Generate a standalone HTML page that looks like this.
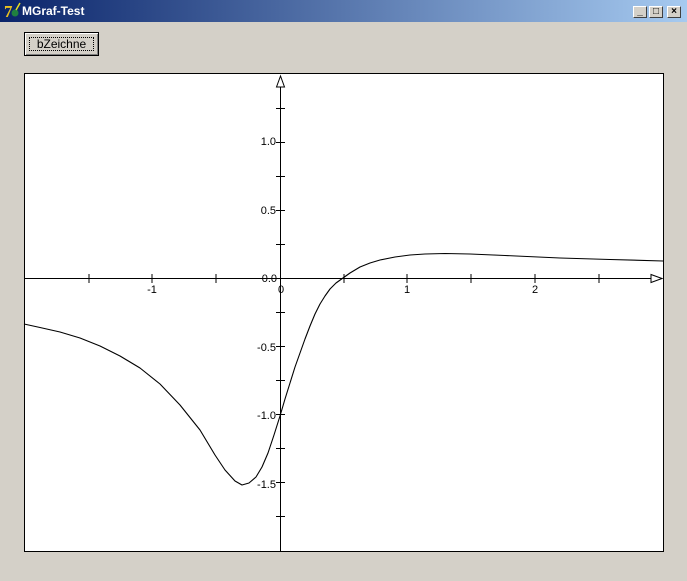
<!DOCTYPE html>
<html><head><style>
body{margin:0;width:687px;height:581px;overflow:hidden;background:#d4d0c8;font-family:"Liberation Sans",sans-serif;position:relative}
.tb{position:absolute;left:0;top:0;width:687px;height:22px;background:linear-gradient(to right,#0a246a,#a6caf0);}
.tt{position:absolute;left:22px;top:4px;color:#fff;font-weight:bold;font-size:12px}
.cb{position:absolute;top:6px;width:14px;height:12px;background:#d4d0c8;border:1px solid;border-color:#fff #404040 #404040 #fff;box-sizing:border-box;font-size:10px;line-height:10px;text-align:center;color:#000;font-weight:bold}
.btn{position:absolute;left:24px;top:32px;width:75px;height:24px;box-sizing:border-box;border:1px solid #000;background:#d4d0c8;box-shadow:inset 1px 1px #fff,inset -1px -1px #808080}
.btn span{position:absolute;left:4px;top:4px;right:4px;bottom:4px;border:1px dotted #000;font-size:12px;text-align:center;line-height:13px}
</style></head><body>
<div class="tb"><svg width="18" height="18" style="position:absolute;left:3px;top:2px"><text x="1" y="15" font-size="17" font-weight="bold" fill="#e8c020" font-family="Liberation Serif">7</text><circle cx="12" cy="11" r="3.5" fill="#208040"/><line x1="13" y1="8" x2="17" y2="1" stroke="#e8e020" stroke-width="1.5"/></svg><div class="tt">MGraf-Test</div>
<div class="cb" style="left:633px">_</div><div class="cb" style="left:649px">□</div><div class="cb" style="left:667px">×</div></div>
<div class="btn"><span>bZeichne</span></div>
<svg width="687" height="581" style="position:absolute;left:0;top:0" font-family="Liberation Sans" font-size="11">
<rect x="24.5" y="73.5" width="639" height="478" fill="#fff" stroke="#000"/>
<g stroke="#000" stroke-width="1" fill="none" shape-rendering="crispEdges">
<line x1="280.5" y1="76" x2="280.5" y2="551"/>
<line x1="25" y1="278.5" x2="660" y2="278.5"/>
<path d="M89 274v9M152 274v9M216 274v9M344 274v9M407 274v9M471 274v9M535 274v9M599 274v9"/>
<path d="M276 108.5h9M276 142.5h9M276 176.5h9M276 210.5h9M276 244.5h9M276 312.5h9M276 346.5h9M276 380.5h9M276 414.5h9M276 448.5h9M276 482.5h9M276 516.5h9"/>
</g>
<path d="M280.5 76 L276.5 87 L284.5 87 Z" fill="#fff" stroke="#000"/>
<path d="M662 278.5 L651 274.5 L651 282.5 Z" fill="#fff" stroke="#000"/>
<g fill="#000" text-anchor="end">
<text x="276" y="145">1.0</text><text x="276" y="214">0.5</text><text x="277" y="282">0.0</text>
<text x="276" y="351">-0.5</text><text x="276" y="419">-1.0</text><text x="276" y="488">-1.5</text>
</g>
<g fill="#000" text-anchor="middle">
<text x="152" y="293">-1</text><text x="281" y="293">0</text><text x="407" y="293">1</text><text x="535" y="293">2</text>
</g>
<polyline fill="none" stroke="#000" stroke-width="1.1" stroke-linejoin="round" points="24,324 40,327.5 60,332 80,338 100,346 120,356 140,368 160,384 180,405 200,430 215,455 225,470 235,481 242,485 249,483 256,477 262,467 268,453 274,435 280,416 285,399 290,383 295,367 300,353 305,339 310,326 315,314 320,304 325,296 330,289 336,283 343,278 350,273 360,267 370,263 380,260 395,257 410,255 425,254 445,253.5 470,254 505,255.5 560,258 610,259.5 663,261"/>
</svg>
</body></html>
